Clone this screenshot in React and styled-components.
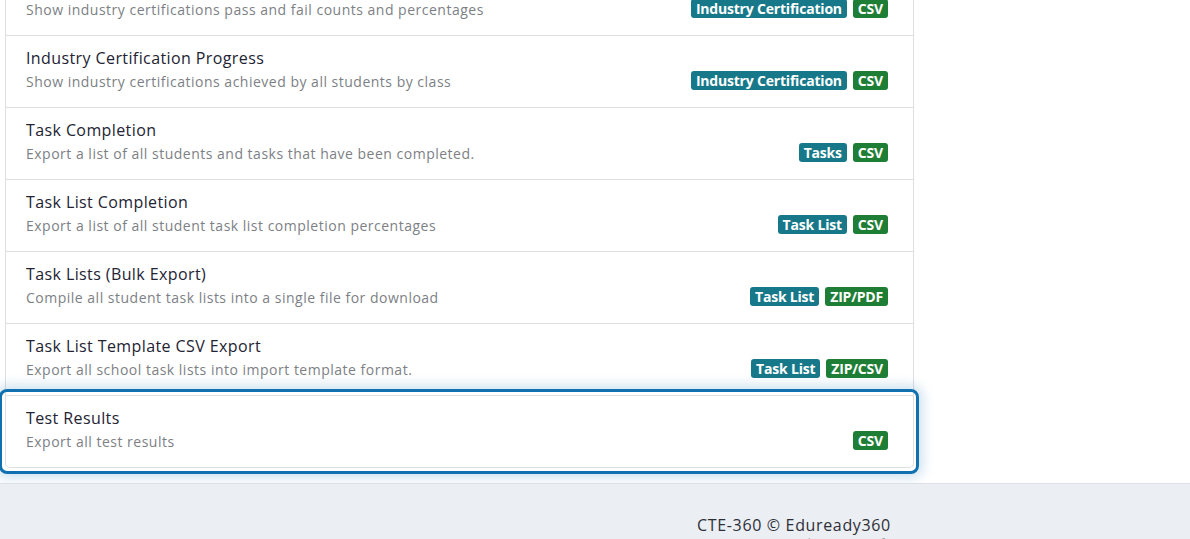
import React from 'react';
import styled, { createGlobalStyle } from 'styled-components';

const GlobalStyle = createGlobalStyle`
  html, body {
    margin: 0;
    padding: 0;
    background: #ffffff;
    font-family: 'Open Sans', 'Liberation Sans', sans-serif;
    overflow: hidden;
  }
`;

const Page = styled.div`
  width: 1190px;
  height: 539px;
  display: flex;
  flex-direction: column;
  overflow: hidden;
`;

const Main = styled.main`
  background: #ffffff;
  height: 483px;
  flex-shrink: 0;
  overflow: hidden;
  padding-left: 5px;
  box-sizing: border-box;
`;

const ListGroup = styled.div`
  width: 909px;
  margin-top: -37px;
  display: flex;
  flex-direction: column;
`;

const ListItem = styled.a`
  position: relative;
  display: flex;
  align-items: flex-end;
  justify-content: space-between;
  padding: 10px 25px 13px 20px;
  border: 1px solid #dedfe1;
  border-top-width: ${p => (p.$first ? '1px' : '0')};
  border-radius: ${p => (p.$last ? '0 0 5px 5px' : '0')};
  background: #fff;
  text-decoration: none;
  cursor: pointer;

  ${p => p.$focused && `
    &::after {
      content: '';
      position: absolute;
      inset: -7px -6px -7px -7px;
      border: 3px solid #1170b0;
      border-radius: 8px;
      box-shadow: 0 0 12px 4px rgba(17, 112, 176, 0.2);
      pointer-events: none;
    }
  `}
`;

const ItemText = styled.div`
  display: flex;
  flex-direction: column;
`;

const ItemTitle = styled.div`
  font-size: 16px;
  line-height: 24px;
  letter-spacing: 0.4px;
  color: #232333;
`;

const ItemDesc = styled.div`
  font-size: 14px;
  line-height: 24px;
  letter-spacing: 0.5px;
  color: #7d7f86;
`;

const Badges = styled.div`
  display: flex;
  gap: 6px;
  padding-bottom: 4px;
`;

const Badge = styled.span`
  display: inline-block;
  padding: 0 5px;
  height: 19px;
  line-height: 19px;
  border-radius: 3px;
  font-size: 14px;
  font-weight: 700;
  letter-spacing: -0.2px;
  color: #fff;
  background: ${p => (p.$kind === 'format' ? '#1f7e35' : '#177889')};
`;

const Footer = styled.footer`
  flex: 1;
  background: #ebeef3;
  border-top: 1px solid #dde1e7;
  display: flex;
  flex-direction: column;
  align-items: center;
  padding: 30px 0 0 398px;
`;

const FooterLine = styled.div`
  font-size: 16px;
  line-height: 22px;
  letter-spacing: 0.65px;
  color: #2e2e38;
`;

const FooterSub = styled.div`
  font-size: 12px;
  line-height: 16px;
  color: #9aa0a8;
`;

const reports = [
  {
    title: 'Industry Certification Results',
    desc: 'Show industry certifications pass and fail counts and percentages',
    tags: ['Industry Certification'],
    format: 'CSV',
  },
  {
    title: 'Industry Certification Progress',
    desc: 'Show industry certifications achieved by all students by class',
    tags: ['Industry Certification'],
    format: 'CSV',
  },
  {
    title: 'Task Completion',
    desc: 'Export a list of all students and tasks that have been completed.',
    tags: ['Tasks'],
    format: 'CSV',
  },
  {
    title: 'Task List Completion',
    desc: 'Export a list of all student task list completion percentages',
    tags: ['Task List'],
    format: 'CSV',
  },
  {
    title: 'Task Lists (Bulk Export)',
    desc: 'Compile all student task lists into a single file for download',
    tags: ['Task List'],
    format: 'ZIP/PDF',
  },
  {
    title: 'Task List Template CSV Export',
    desc: 'Export all school task lists into import template format.',
    tags: ['Task List'],
    format: 'ZIP/CSV',
  },
  {
    title: 'Test Results',
    desc: 'Export all test results',
    tags: [],
    format: 'CSV',
  },
];

export default function App() {
  return (
    <Page>
      <GlobalStyle />
      <Main>
        <ListGroup>
          {reports.map((r, i) => {
            const last = i === reports.length - 1;
            return (
              <ListItem
                key={r.title}
                href="#"
                $first={i === 0}
                $last={last}
                $focused={last}
                onClick={e => e.preventDefault()}
              >
                <ItemText>
                  <ItemTitle>{r.title}</ItemTitle>
                  <ItemDesc>{r.desc}</ItemDesc>
                </ItemText>
                <Badges>
                  {r.tags.map(t => (
                    <Badge key={t}>{t}</Badge>
                  ))}
                  <Badge $kind="format">{r.format}</Badge>
                </Badges>
              </ListItem>
            );
          })}
        </ListGroup>
      </Main>
      <Footer>
        <FooterLine>CTE-360 © Eduready360</FooterLine>
        <FooterSub>Version 3.2 · Privacy Policy · Terms of Use</FooterSub>
      </Footer>
    </Page>
  );
}
